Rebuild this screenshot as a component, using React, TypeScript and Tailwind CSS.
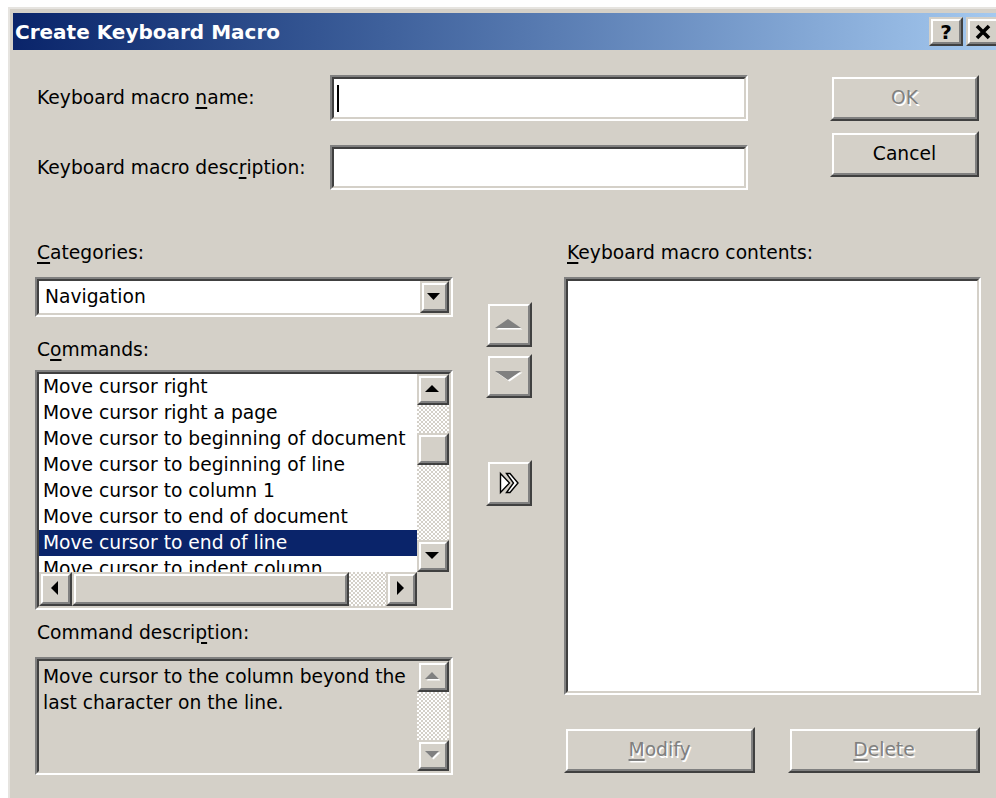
import React from "react";

const FONT = "font-['DejaVu_Sans',sans-serif]";
const DITHER = "bg-[image:repeating-conic-gradient(#ffffff_0%_25%,#d4d0c8_0%_50%)] bg-[length:4px_4px]";

function Raised({ className = "", inner = "", children }: { className?: string; inner?: string; children?: React.ReactNode }) {
  return (
    <div className={`border-2 border-t-[#d4d0c8] border-l-[#d4d0c8] border-r-[#404040] border-b-[#404040] bg-[#d4d0c8] ${className}`}>
      <div className={`h-full w-full border-2 border-t-white border-l-white border-r-[#808080] border-b-[#808080] flex items-center justify-center ${inner}`}>
        {children}
      </div>
    </div>
  );
}

function Sunken({ className = "", inner = "", children }: { className?: string; inner?: string; children?: React.ReactNode }) {
  return (
    <div className={`border-2 border-t-[#808080] border-l-[#808080] border-r-white border-b-white ${className}`}>
      <div className={`h-full w-full border-2 border-t-[#404040] border-l-[#404040] border-r-[#d4d0c8] border-b-[#d4d0c8] ${inner}`}>
        {children}
      </div>
    </div>
  );
}

type Dir = "up" | "down" | "left" | "right";

function Tri({ dir, w = 14, h = 7, color = "#000000", disabled = false }: { dir: Dir; w?: number; h?: number; color?: string; disabled?: boolean }) {
  const vertical = dir === "up" || dir === "down";
  const W = vertical ? w : h;
  const H = vertical ? h : w;
  let pts = "";
  if (dir === "up") pts = `0,${H} ${W},${H} ${W / 2},0`;
  if (dir === "down") pts = `0,0 ${W},0 ${W / 2},${H}`;
  if (dir === "left") pts = `${W},0 ${W},${H} 0,${H / 2}`;
  if (dir === "right") pts = `0,0 0,${H} ${W},${H / 2}`;
  return (
    <svg width={W + 2} height={H + 2} viewBox={`0 0 ${W + 2} ${H + 2}`}>
      {disabled && <polygon points={pts} fill="#ffffff" transform="translate(1.5,1.5)" />}
      <polygon points={pts} fill={disabled ? "#808080" : color} />
    </svg>
  );
}

function Label({ pre, u, post, className = "" }: { pre: string; u: string; post: string; className?: string }) {
  return (
    <div className={`h-[24px] leading-[24px] whitespace-nowrap ${className}`}>
      {pre}
      <span className="underline underline-offset-[3px] decoration-[1.5px]">{u}</span>
      {post}
    </div>
  );
}

const commands = [
  "Move cursor right",
  "Move cursor right a page",
  "Move cursor to beginning of document",
  "Move cursor to beginning of line",
  "Move cursor to column 1",
  "Move cursor to end of document",
  "Move cursor to end of line",
  "Move cursor to indent column",
];

function DisabledText({ children }: { children: React.ReactNode }) {
  return <span className="text-[#808080] [text-shadow:1.5px_1.5px_0_#ffffff]">{children}</span>;
}

// "add to macro" glyph: an outlined triangle followed by an outlined chevron
function DoubleArrow() {
  return (
    <svg width="24" height="26" viewBox="0 0 24 26">
      <path d="M3.5 3.5 V22.5 L12.5 13 Z" fill="#ffffff" stroke="#000000" strokeWidth="1.4" strokeLinejoin="miter" />
      <path d="M9.5 3.5 H13 L21 13 L13 22.5 H9.5 L16.5 13 Z" fill="#ffffff" stroke="#000000" strokeWidth="1.4" strokeLinejoin="miter" />
    </svg>
  );
}

export default function App() {
  return (
    <div className={`w-[996px] h-[798px] overflow-hidden bg-white pl-[8px] pt-[7px] text-[18.7px] text-black ${FONT}`}>
      <div className="w-[995px] h-[900px] border-l-2 border-t-2 border-[#e6e4e0] bg-[#d4d0c8] pl-[3px] pt-[4px]">
        {/* title bar */}
        <div className="h-[37px] flex items-center bg-linear-to-r from-[#0a246a] to-[#a6caf0]">
          <div className="pl-[2px] text-white font-bold text-[20px] leading-none whitespace-nowrap">Create Keyboard Macro</div>
          <div className="ml-auto mr-[3px] flex gap-[3px]">
            <Raised className="w-[34px] h-[29px]">
              <span className="font-bold text-[20px] leading-none mt-[1px]">?</span>
            </Raised>
            <Raised className="w-[34px] h-[29px]">
              <svg width="18" height="16" viewBox="0 0 18 16">
                <path d="M3 2 L15 14 M15 2 L3 14" stroke="#000000" strokeWidth="3.6" />
              </svg>
            </Raised>
          </div>
        </div>

        {/* name / description fields with OK and Cancel */}
        <div className="flex pt-[25px]">
          <div className="ml-[24px] w-[711px] flex flex-col">
            <div className="h-[46px] flex items-center">
              <Label className="w-[293px]" pre="Keyboard macro " u="n" post="ame:" />
              <Sunken className="w-[418px] h-[46px] bg-white" inner="bg-white flex items-center">
                <div className="ml-[3px] w-[2px] h-[27px] bg-black" />
              </Sunken>
            </div>
            <div className="mt-[24px] h-[45px] flex items-center">
              <Label className="w-[293px]" pre="Keyboard macro desc" u="r" post="iption:" />
              <Sunken className="w-[418px] h-[45px] bg-white" inner="bg-white" />
            </div>
          </div>
          <div className="ml-[82px] w-[149px] flex flex-col">
            <Raised className="h-[46px]">
              <DisabledText>OK</DisabledText>
            </Raised>
            <Raised className="mt-[10px] h-[46px]">Cancel</Raised>
          </div>
        </div>

        {/* lower area */}
        <div className="flex mt-[51px]">
          {/* categories, commands, description */}
          <div className="ml-[22px] w-[418px] flex flex-col">
            <Label className="pl-[2px]" pre="" u="C" post="ategories:" />
            <Sunken className="mt-[12px] h-[40px]" inner="bg-white flex items-center">
              <div className="flex-1 pl-[6px] leading-none">Navigation</div>
              <Raised className="w-[29px] h-full">
                <Tri dir="down" w={13} h={7} />
              </Raised>
            </Sunken>
            <Label className="mt-[21px] pl-[2px]" pre="C" u="o" post="mmands:" />
            <Sunken className="mt-[8px] h-[240px]" inner="bg-white flex flex-col">
              <div className="flex h-[198px]">
                <div className="flex-1 overflow-hidden">
                  {commands.map((c, i) => (
                    <div
                      key={c}
                      className={`h-[26px] leading-[26px] pl-[4px] whitespace-nowrap ${i === 6 ? "bg-[#0a246a] text-white" : ""}`}
                    >
                      {c}
                    </div>
                  ))}
                </div>
                <div className="w-[32px] flex flex-col">
                  <Raised className="h-[31px]">
                    <Tri dir="up" />
                  </Raised>
                  <div className={`h-[28px] ${DITHER}`} />
                  <Raised className="h-[32px]" />
                  <div className={`flex-1 ${DITHER}`} />
                  <Raised className="h-[32px]">
                    <Tri dir="down" />
                  </Raised>
                </div>
              </div>
              <div className="flex h-[34px]">
                <Raised className="w-[33px]">
                  <Tri dir="left" />
                </Raised>
                <Raised className="w-[277px]" />
                <div className={`flex-1 ${DITHER}`} />
                <Raised className="w-[31px]">
                  <Tri dir="right" />
                </Raised>
                <div className="w-[32px] bg-[#d4d0c8]" />
              </div>
            </Sunken>
            <Label className="mt-[11px] pl-[2px]" pre="Command descri" u="p" post="tion:" />
            <Sunken className="mt-[12px] h-[118px]" inner="bg-[#d4d0c8] flex">
              <div className="flex-1 pl-[4px] pt-[3px] leading-[26px]">
                <div className="whitespace-nowrap">Move cursor to the column beyond the</div>
                <div className="whitespace-nowrap">last character on the line.</div>
              </div>
              <div className="w-[32px] flex flex-col">
                <Raised className="h-[31px]">
                  <Tri dir="up" disabled />
                </Raised>
                <div className={`flex-1 ${DITHER}`} />
                <Raised className="h-[31px]">
                  <Tri dir="down" disabled />
                </Raised>
              </div>
            </Sunken>
          </div>

          {/* move up / move down / add buttons */}
          <div className="ml-[33px] w-[46px] flex flex-col">
            <Raised className="mt-[61px] h-[45px]">
              <Tri dir="up" w={26} h={9} disabled />
            </Raised>
            <Raised className="mt-[7px] h-[44px]">
              <Tri dir="down" w={26} h={9} disabled />
            </Raised>
            <Raised className="mt-[62px] h-[46px]">
              <DoubleArrow />
            </Raised>
          </div>

          {/* macro contents */}
          <div className="ml-[32px] w-[417px] flex flex-col">
            <Label className="pl-[3px]" pre="" u="K" post="eyboard macro contents:" />
            <Sunken className="mt-[12px] h-[418px]" inner="bg-white" />
            <div className="mt-[32px] flex h-[46px]">
              <Raised className="w-[191px]">
                <DisabledText>
                  <span className="underline underline-offset-[3px] decoration-[1.5px]">M</span>odify
                </DisabledText>
              </Raised>
              <Raised className="ml-[33px] w-[192px]">
                <DisabledText>
                  <span className="underline underline-offset-[3px] decoration-[1.5px]">D</span>elete
                </DisabledText>
              </Raised>
            </div>
          </div>
        </div>
      </div>
    </div>
  );
}
